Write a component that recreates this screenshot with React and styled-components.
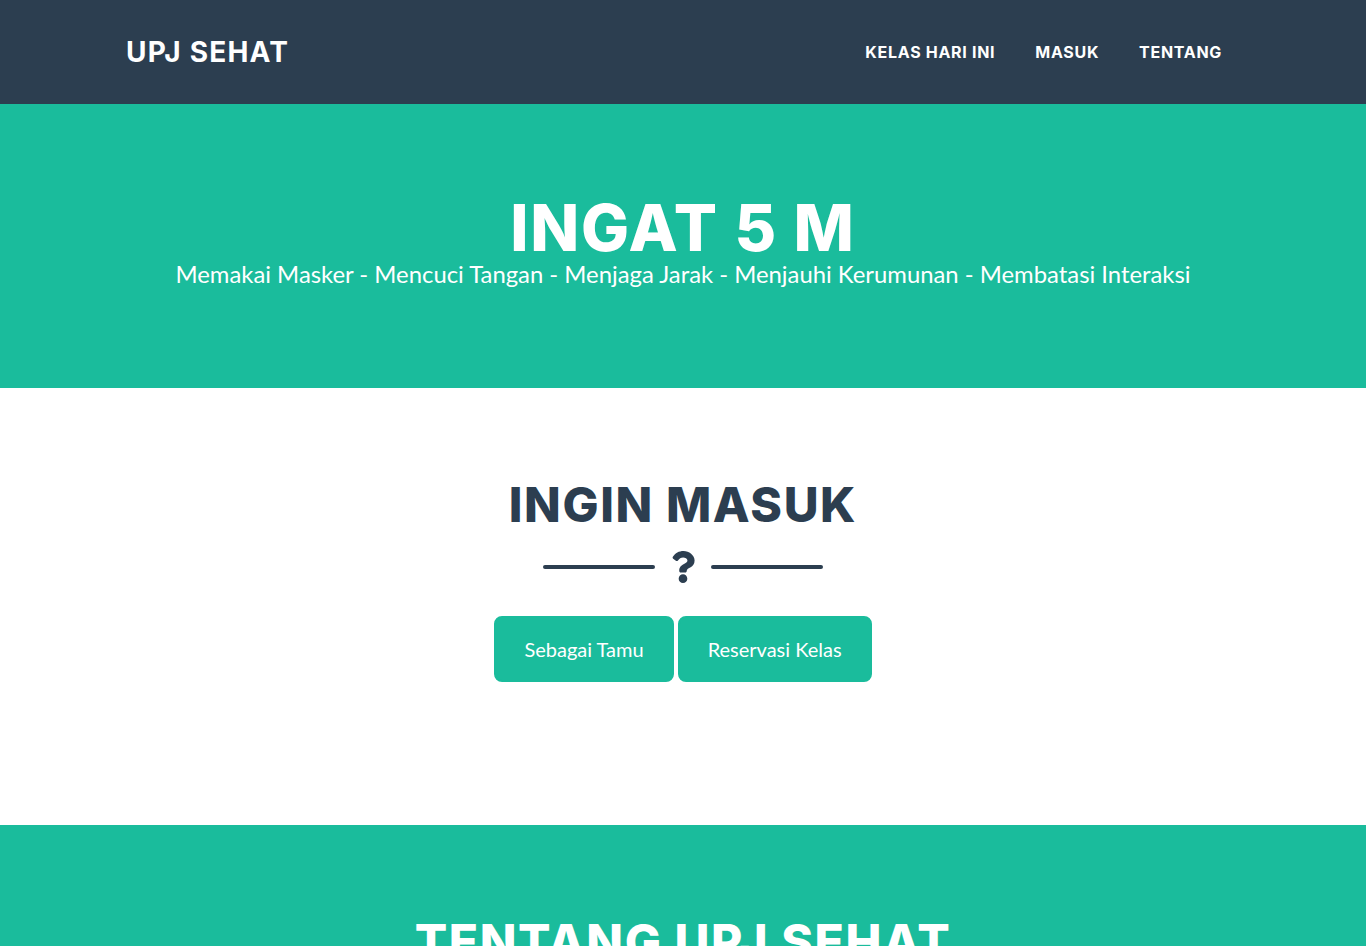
import React from "react";
import styled, { createGlobalStyle } from "styled-components";
import { FaQuestion } from "react-icons/fa";

const GlobalStyle = createGlobalStyle`
  * { box-sizing: border-box; }
  body {
    margin: 0;
    font-family: Lato, "Open Sans", sans-serif;
    background: #fff;
  }
`;

const navLinks = ["KELAS HARI INI", "MASUK", "TENTANG"];

export default function App() {
  return (
    <>
      <GlobalStyle />
      <Nav>
        <NavInner>
          <Brand href="#">UPJ SEHAT</Brand>
          <NavList>
            {navLinks.map((l) => (
              <NavItem key={l}>
                <NavLink href="#">{l}</NavLink>
              </NavItem>
            ))}
          </NavList>
        </NavInner>
      </Nav>

      <Masthead>
        <MastTitle>INGAT 5 M</MastTitle>
        <MastSub>
          Memakai Masker - Mencuci Tangan - Menjaga Jarak - Menjauhi Kerumunan - Membatasi Interaksi
        </MastSub>
      </Masthead>

      <Section>
        <Heading>INGIN MASUK</Heading>
        <Divider>
          <DividerLine />
          <DividerIcon>
            <FaQuestion />
          </DividerIcon>
          <DividerLine />
        </Divider>
        <ButtonRow>
          <Button href="#">Sebagai Tamu</Button>
          <Button href="#">Reservasi Kelas</Button>
        </ButtonRow>
      </Section>

      <Section $teal>
        <Heading $light>TENTANG UPJ SEHAT</Heading>
      </Section>
    </>
  );
}

const Nav = styled.nav`
  background: #2c3e50;
  height: 104px;
  display: flex;
  align-items: center;
`;

const NavInner = styled.div`
  width: 1140px;
  margin: 0 auto;
  padding: 0 11px 0 15px;
  display: flex;
  align-items: center;
  justify-content: space-between;
`;

const Brand = styled.a`
  font-family: Inter, "DejaVu Sans", sans-serif;
  font-weight: 700;
  font-size: 28px;
  letter-spacing: 1.2px;
  color: #fff;
  text-decoration: none;
  margin-left: -2px;
`;

const NavList = styled.ul`
  list-style: none;
  margin: 0;
  padding: 0;
  display: flex;
`;

const NavItem = styled.li`
  margin: 0 4px;
`;

const NavLink = styled.a`
  display: block;
  padding: 12px 16px;
  font-family: Inter, "DejaVu Sans", sans-serif;
  font-weight: 700;
  font-size: 16px;
  letter-spacing: 0.7px;
  color: #fff;
  text-decoration: none;
`;

const Masthead = styled.header`
  background: #1abc9c;
  height: 284px;
  padding-top: 92px;
  text-align: center;
  color: #fff;
`;

const MastTitle = styled.h1`
  margin: 0;
  font-family: Inter, "DejaVu Sans", sans-serif;
  font-weight: 800;
  font-size: 64px;
  letter-spacing: 1.7px;
  line-height: 1;
`;

const MastSub = styled.p`
  margin: 0;
  font-size: 23.85px;
  line-height: 1.2;
  font-weight: 400;
`;

const Section = styled.section`
  background: ${(p) => (p.$teal ? "#1abc9c" : "#fff")};
  height: ${(p) => (p.$teal ? "auto" : "437px")};
  padding-top: 88px;
  padding-bottom: ${(p) => (p.$teal ? "80px" : "0")};
  text-align: center;
`;

const Heading = styled.h2`
  margin: 0;
  font-family: Inter, "DejaVu Sans", sans-serif;
  font-weight: 800;
  font-size: 48px;
  letter-spacing: 1.6px;
  line-height: 1.2;
  color: ${(p) => (p.$light ? "#fff" : "#2c3e50")};
`;

const Divider = styled.div`
  display: flex;
  align-items: center;
  justify-content: center;
  margin-top: 17px;
  height: 32px;
  color: #2c3e50;
`;

const DividerLine = styled.div`
  width: 112px;
  height: 4px;
  border-radius: 16px;
  background: #2c3e50;
`;

const DividerIcon = styled.div`
  margin: 0 16px;
  display: flex;
  svg {
    width: 24px;
    height: 32px;
  }
`;

const ButtonRow = styled.div`
  margin-top: 33px;
  display: flex;
  justify-content: center;
  gap: 4px;
`;

const Button = styled.a`
  display: inline-block;
  padding: 16px 28px;
  font-size: 20px;
  line-height: 1.5;
  color: #fff;
  background: #1abc9c;
  border: 2px solid #1abc9c;
  border-radius: 8px;
  text-decoration: none;
`;
